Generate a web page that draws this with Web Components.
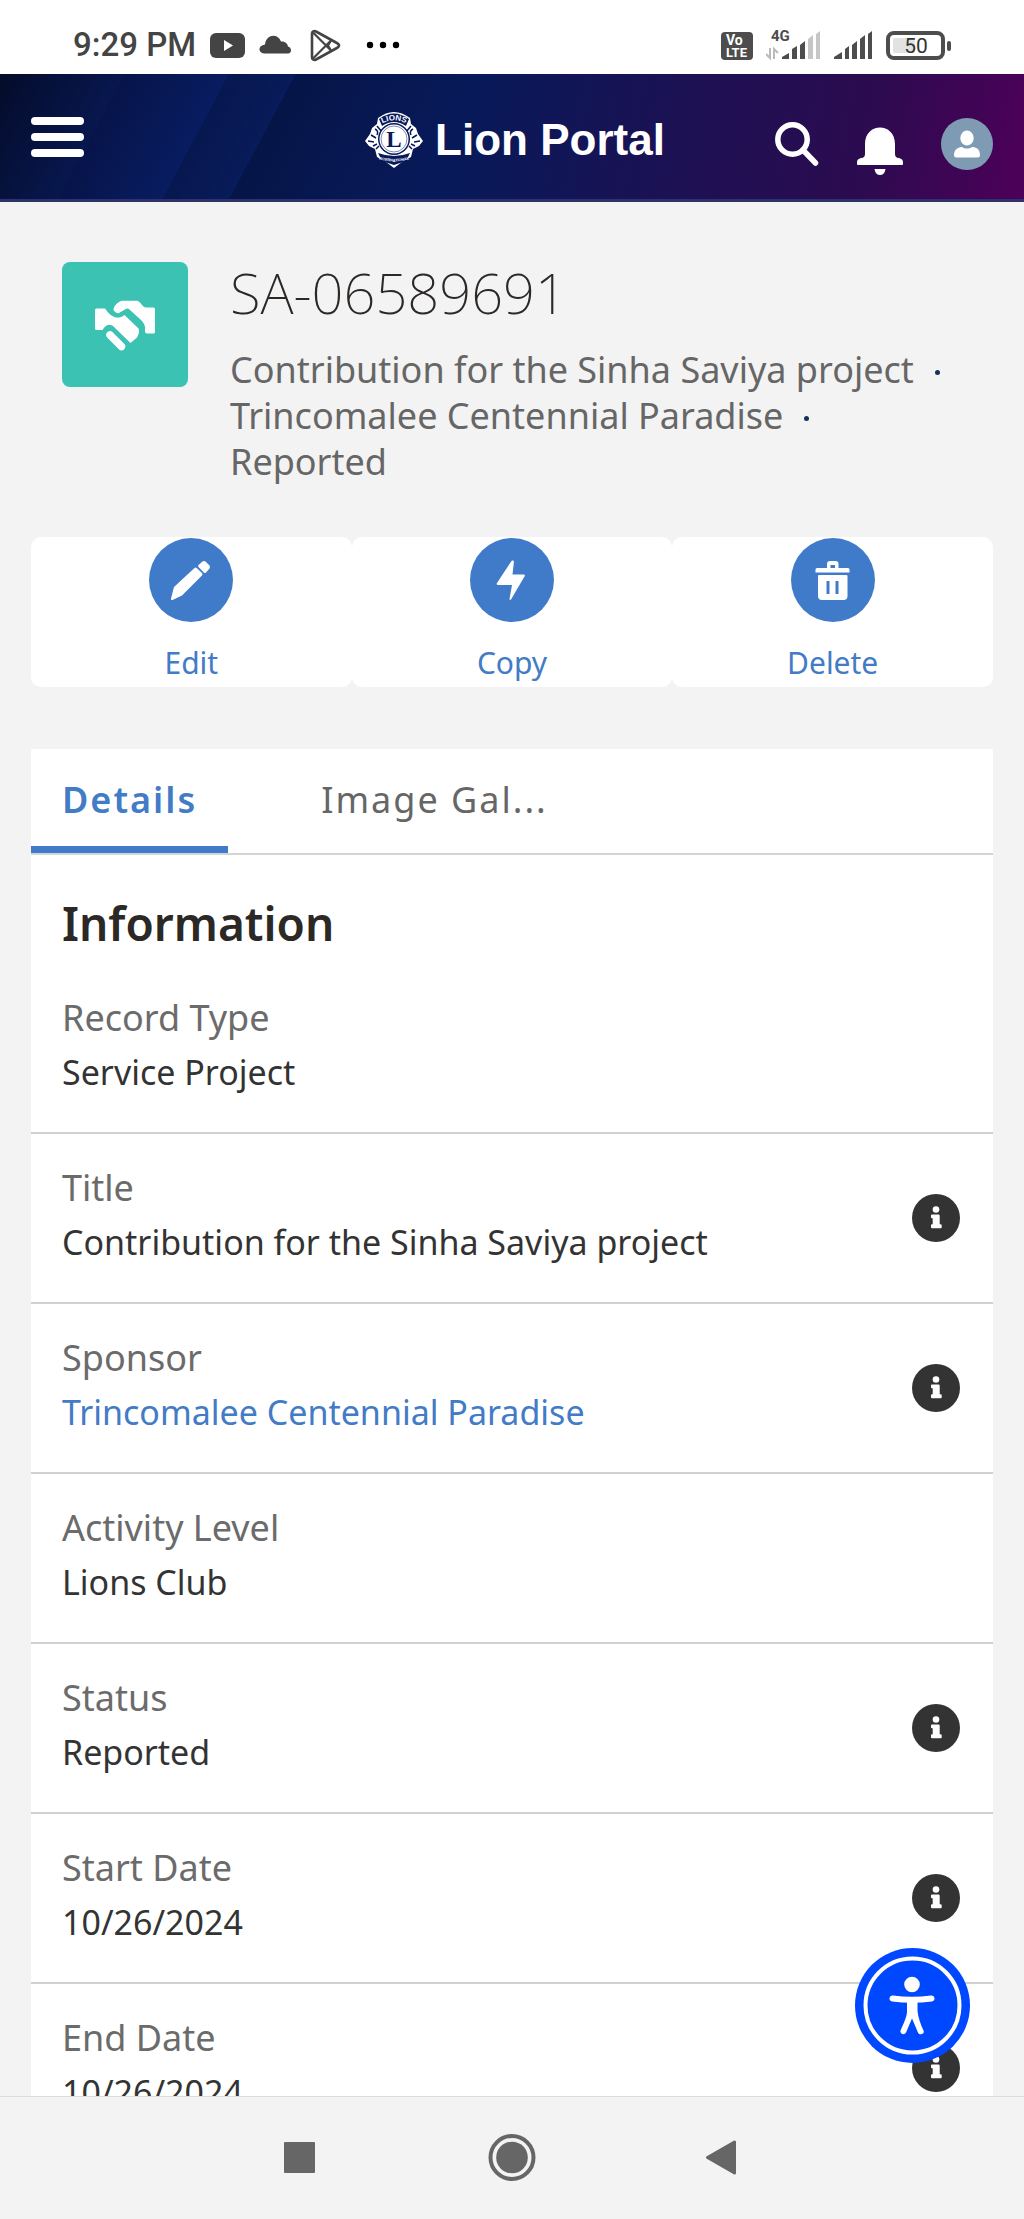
<!DOCTYPE html>
<html lang="en">
<head>
<meta charset="utf-8">
<meta name="viewport" content="width=device-width, initial-scale=1">
<title>Lion Portal</title>
<style>
  html, body { margin: 0; height: 100%; }
  body { font-family: "Noto Sans", "Open Sans", sans-serif; background: #f3f3f3; color: #333; }
</style>
</head>
<body>
<portal-app></portal-app>
<script>
const define = (name, html, setup) => {
  const template = document.createElement('template');
  template.innerHTML = html;
  customElements.define(name, class extends HTMLElement {
    constructor() {
      super();
      this.attachShadow({ mode: 'open' }).append(template.content.cloneNode(true));
    }
    connectedCallback() { if (setup) setup(this, this.shadowRoot); }
  });
};

define('status-bar', `
<style>
  :host { display: flex; justify-content: space-between; align-items: center; height: 58px; padding: 16px 73px 0; background: #fff; color: #444; font-family: Roboto, sans-serif; flex: none; }
  div { display: flex; align-items: center; }
  .left { gap: 14px; } .right { gap: 13px; }
  time { font-size: 33px; font-weight: 500; line-height: 40px; }
  svg { display: block; }
</style>
<div class="left">
  <time>9:29 PM</time>
  <svg width="35" height="36" viewBox="0 0 35 36"><rect y="6" width="35" height="25" rx="6" fill="#444"/><path d="M14 13v11l9-5.500z" fill="#fff"/></svg>
  <svg width="32" height="36" viewBox="0 0 32 36" fill="#444"><path d="M5 26.500c-6-.5-6.500-8 1-9C7 7 19 6 22 14.500c4-.5 6.500 2 7 5 4 1 4 6.500 0 7z"/></svg>
  <svg width="39" height="36" viewBox="0 0 39 36" fill="none" stroke="#444" stroke-width="2.600" stroke-linejoin="round"><path d="M7 6.500c0-2 2-3 4-2l20 11c4 2 4 4 0 6L11 32.500c-2 1-4 0-4-2z"/><path d="M8 5.500l18 18M8 31.500l18-18M26 13.500l-3 5 3 5" stroke-width="2.200"/></svg>
  <svg width="44" height="36" viewBox="0 0 44 36"><circle cx="12" cy="18" r="3.200"/><circle cx="25" cy="18" r="3.200"/><circle cx="38" cy="18" r="3.200"/></svg>
</div>
<div class="right">
  <svg width="32" height="36" viewBox="0 0 32 36"><rect y="5" width="32" height="28" rx="4" fill="#4d4d4d"/><g fill="#fff" font-family="Roboto, sans-serif" font-weight="700"><text x="5" y="18" font-size="14">Vo</text><text x="5" y="30" font-size="13">LTE</text></g></svg>
  <svg width="55" height="36" viewBox="0 0 55 36" fill="#4d4d4d"><text x="5" y="14" font-family="Roboto, sans-serif" font-weight="700" font-size="15">4G</text><path d="M4 21v10l-4-4M8 32V22l4 4" fill="none" stroke="#bbb" stroke-width="2"/><path d="M16 32v-2l7-4v6zM26 32V22l5-3v13zM34 32V18l5-4v18z"/><path d="M42 32V12l5-4v24zM50 32V7l4-3v28z" fill="#c6c6c6"/></svg>
  <svg width="39" height="36" viewBox="0 0 39 36" fill="#4d4d4d"><path d="M0 32v-2l8-5v7zM11 32V22l4-3v13zM18 32V18l5-4v18zM26 32V12l5-4v24zM34 32V7l4-3v28z"/></svg>
  <svg width="65" height="36" viewBox="0 0 65 36"><rect x="2" y="6" width="55" height="25" rx="6" fill="#fff" stroke="#4d4d4d" stroke-width="4"/><rect x="7" y="11" width="22" height="15" rx="2" fill="#e2e2e2"/><rect x="61" y="14" width="4" height="10" rx="2" fill="#4d4d4d"/><text x="30" y="26" text-anchor="middle" font-family="Roboto, sans-serif" font-weight="400" font-size="21" fill="#333">50</text></svg>
</div>`);

define('lions-emblem', `
<style>:host { display: block; } svg { display: block; overflow: visible; }</style>
<svg width="58" height="56" viewBox="0 0 58 56">
  <path d="M13 6Q29-6 45 6l1 6 5 4 2 6 5 7-4 5-6 3-2 8-9 5-8 6-8-6-9-5-2-8-6-3-4-5 5-7 2-6 5-4z" fill="#fff"/>
  <path d="M14 7Q29-4 44 7l-3 7Q29 6 17 14z" fill="#07195a"/>
  <path d="M13 41q16 6 32 0l-4 8-12 4-12-4z" fill="#07195a"/>
  <path d="M10 17q4 2 2 6M6 23l5 3M3 29l6 1M8 34l4-2M11 37l3-3M48 17q-4 2-2 6M52 23l-5 3M55 29l-6 1M50 34l-4-2M47 37l-3-3M12 14l5 6M46 14l-5 6" fill="none" stroke="#07195a" stroke-width="1.500"/>
  <circle cx="29" cy="27" r="16" fill="#07195a"/><circle cx="29" cy="27" r="14.500" fill="#fff"/>
  <circle cx="29" cy="27" r="13" fill="none" stroke="#07195a" stroke-width=".5"/>
  <path id="top" d="M15 12.500Q29 4.500 43 12.500" fill="none"/><path id="low" d="M13 47Q29 52 45 47" fill="none"/>
  <text font-family="Liberation Sans, sans-serif" font-weight="700" font-size="8" fill="#fff" text-anchor="middle"><textPath href="#top" startOffset="50%">LIONS</textPath></text>
  <text font-family="Liberation Sans, sans-serif" font-weight="700" font-size="3.800" fill="#fff" text-anchor="middle"><textPath href="#low" startOffset="50%">INTERNATIONAL</textPath></text>
  <text x="29" y="35" font-family="Liberation Serif, serif" font-weight="700" font-size="23" fill="#07195a" text-anchor="middle">L</text>
</svg>`);

define('portal-header', `
<style>
  :host { display: grid; grid-template-columns: 1fr auto 1fr; align-items: center; height: 125px; padding: 0 31px; flex: none;
    border-bottom: 3px solid #2d3269;
    background: linear-gradient(118deg, #050c2a 0, #07174e 110px, #07144a 110px, #081c60 202px, #07174f 202px, #081b5a 261px, #061547 261px, rgba(7,26,90,0) 420px),
      linear-gradient(100deg, #071a5a 0, #081959 46%, #1a1254 64%, #2c0b50 84%, #4d0058 100%); }
  button, a.me { border: 0; padding: 0; background: none; cursor: pointer; display: block; }
  .menu { justify-self: start; }
  .brand { display: flex; align-items: center; gap: 12px; color: #fff; text-decoration: none; font: 700 44px/52px "Liberation Sans", sans-serif; padding: 7px 0 0 6px; }
  .tools { justify-self: end; display: flex; align-items: center; gap: 38px; padding-top: 14px; }
  svg { display: block; }
</style>
<button class="menu" aria-label="Menu"><svg width="53" height="40" viewBox="0 0 53 40" fill="#fff"><rect width="53" height="8" rx="4"/><rect y="16" width="53" height="8" rx="4"/><rect y="32" width="53" height="8" rx="4"/></svg></button>
<a class="brand" href="#"><lions-emblem></lions-emblem><span>Lion Portal</span></a>
<div class="tools">
  <button aria-label="Search"><svg width="44" height="44" viewBox="0 0 44 44" fill="none" stroke="#fff" stroke-width="5.500" stroke-linecap="round"><circle cx="17.500" cy="17.500" r="14.700"/><path d="M28 28l12.500 13"/></svg></button>
  <button aria-label="Notifications"><svg width="46" height="62" viewBox="0 0 46 62" fill="#fff"><path d="M8 31C8 9 38 9 38 31v10q0 4 4 4 4 1 4 4v2q0 1-1 1H1q-1 0-1-1v-2q0-3 4-4 4 0 4-4z"/><path d="M17.500 56h11q-1 6-5.500 6t-5.500-6z"/></svg></button>
  <a class="me" href="#" aria-label="My profile"><svg width="52" height="52" viewBox="0 0 52 52"><circle cx="26" cy="26" r="26" fill="#7f9bb3"/><ellipse cx="26" cy="20" rx="6.700" ry="7.400" fill="#fff"/><path d="M13 37c0-6 5-8 8-8 3 2 7 2 10 0 4 0 8 2 8 8q0 2.500-2.500 2.500h-21Q13 39.500 13 37z" fill="#fff"/></svg></a>
</div>`);

define('record-summary', `
<style>
  :host { display: flex; align-items: flex-start; gap: 42px; padding: 58px 62px 52px; }
  .tile { flex: none; margin-top: 2px; width: 126px; height: 125px; border-radius: 8px; background: #3cc2b3; }
  .text { min-width: 0; }
  h1 { margin: 0 0 23px; font-size: 56px; font-weight: 200; line-height: 64px; color: #2b2826; }
  ::slotted(ul) { margin: 0; padding: 0; list-style: none; font-size: 36px; line-height: 46px; color: #666; }
</style>
<svg class="tile" viewBox="0 0 126 125" fill="#fff" aria-hidden="true">
  <path d="M33 48q0-1.500 1.500-1.500H43c4 6 11 13 19.500 6.500L76 66c2 2 1 6-1 9.500L68.500 81 53 66c-4-5-9-4-12.500 2H34.500Q33 68 33 66.500z"/>
  <path d="M51.500 48c0-4 5-9 9-9.200h14.500c2 0 3.500 2.500 5 4.200 1.500 2 3 2.500 5 2.500h6.500q1.500 0 1.500 1.500v23q0 1.500-1.500 1.500h-6.500q-2 0-2-2v-4c0-3-2-5-4-7.500L68 48q-2.500-2.500-5-.5l-6 3.500q-3.500 1-5.500-3z"/>
  <path d="M48 73l11.500 11.500" stroke="#fff" stroke-width="7.500" stroke-linecap="round"/>
</svg>
<div class="text"><h1><slot name="title"></slot></h1><slot></slot></div>`);

const glyphs = {
  edit: '<path d="M25 49L45.500 30q1-1 2.200 0l5.300 5q1 1.200 0 2.400L33 57.500 23.500 62q-2 .5-1.500-1.500z"/><path d="M49.500 27l4-3.500q1.500-1 3 0l4 4q1 1.500 0 3L57 34.500q-1.200 1-2.200 0l-5.300-5.500q-1-1 0-2z"/>',
  copy: '<path d="M42.500 22.500c1 0 1.500.5 1.400 1.500l-1.400 12.500h11.500q1.500.5.5 2L41 61.500q-1.500 1-1.500-.5L42 47H28q-2-.5-1-2l14.500-22z"/>',
  delete: '<path d="M36 30v-4q0-3 3-3h5.500q3 0 3 3v4H57q1.500 0 1.500 1.500v3H24.500v-3Q24.500 30 26 30zm3.500 0H44v-3h-4.500z" fill-rule="evenodd"/><path d="M28 37h27.500q1 0 1 1v20q0 4-4 4H31q-4 0-4-4V38q0-1 1-1zm7.500 6v13h3V43zm9 0v13h3V43z" fill-rule="evenodd"/>'
};
define('action-button', `
<style>
  :host { display: block; flex: 1; }
  button { display: flex; flex-direction: column; align-items: center; width: 100%; height: 150px; border: 0; border-radius: 10px; padding: 1px 0 0; background: #fff; color: #427bc6; font: inherit; font-size: 30px; line-height: 40px; cursor: pointer; }
  svg { display: block; width: 84px; height: 84px; margin-bottom: 21px; }
</style>
<button><svg viewBox="0 0 84 84" aria-hidden="true"><circle cx="42" cy="42" r="42" fill="#407bca"/><g fill="#fff"></g></svg><slot></slot></button>`,
  (el, root) => { root.querySelector('g').innerHTML = glyphs[el.getAttribute('icon')]; });

define('record-tab', `
<style>
  :host { display: block; }
  button { border: 0; border-bottom: 7px solid transparent; background: none; padding: 24px 31px 19px; font: inherit; font-size: 36px; line-height: 54px; letter-spacing: 2px; color: #666; cursor: pointer; display: block; }
  :host([selected]) button { color: #427bc6; font-weight: 600; border-color: #407bca; }
</style>
<button role="tab"><slot></slot></button>`,
  (el, root) => root.querySelector('button').setAttribute('aria-selected', el.hasAttribute('selected')));

define('record-card', `
<style>
  :host { display: block; margin: 62px 31px 0; background: #fff; }
  .tabs { display: flex; gap: 62px; border-bottom: 2px solid #d4d4d4; }
  h2 { margin: 0; padding: 32px 31px 5px; font-size: 46px; font-weight: 600; line-height: 72px; color: #2b2826; }
</style>
<div class="tabs" role="tablist"><slot name="tab"></slot></div>
<h2><slot name="heading"></slot></h2>
<slot></slot>`);

define('record-field', `
<style>
  :host { display: flex; align-items: center; justify-content: space-between; padding: 27px 33px 33px 31px; border-bottom: 2px solid #d0d0d0; }
  .label { font-size: 36px; line-height: 54px; color: #6b6b6b; }
  .value { font-size: 34px; line-height: 54px; color: #333; }
  ::slotted(a) { color: #427bc6; text-decoration: none; }
  button { display: none; border: 0; padding: 0; margin-top: 6px; background: none; cursor: pointer; }
  :host([help]) button { display: block; }
  svg { display: block; }
</style>
<div><div class="label"></div><div class="value"><slot></slot></div></div>
<button><svg width="48" height="48" viewBox="0 0 48 48"><circle cx="24" cy="24" r="24" fill="#333"/><g fill="#fff"><circle cx="24" cy="15.500" r="3.300"/><path d="M19 21.500q0-1 1-1h6.500q1.200 0 1.200 1.200v8.600h.8q1.200 0 1.200 1v2q0 1-1 1h-8.700q-1 0-1-1v-2q0-1 1-1h.7v-6H20q-1 0-1-1z"/></g></svg></button>`,
  (el, root) => {
    root.querySelector('.label').textContent = el.getAttribute('label');
    root.querySelector('button').setAttribute('aria-label', 'Help ' + el.getAttribute('label'));
  });

define('accessibility-button', `
<style>
  :host { display: block; position: absolute; right: 54px; bottom: 33px; }
  button { display: block; border: 0; padding: 0; background: none; border-radius: 50%; cursor: pointer; }
  svg { display: block; }
</style>
<button aria-label="Accessibility options"><svg width="115" height="115" viewBox="0 0 115 115">
  <circle cx="57.500" cy="57.500" r="57.500" fill="#0048ff"/><circle cx="57.500" cy="57.500" r="47" fill="none" stroke="#fff" stroke-width="4"/>
  <circle cx="57" cy="36.500" r="7.800" fill="#fff"/>
  <path d="M37.500 50.500q19.500 2.500 39 0" fill="none" stroke="#fff" stroke-width="6" stroke-linecap="round"/>
  <path d="M52 52h10.500v11q1 9 6.200 20c1 3-4 4.500-5.500 2L57 70.500 51 84.500c-2 3.500-6.500 1-5.500-2 5-11 6.500-15 6.500-19.500z" fill="#fff"/>
</svg></button>`);

define('system-nav', `
<style>
  :host { display: flex; justify-content: center; align-items: center; gap: 162px; height: 122px; flex: none; border-top: 1px solid #dcdcdc; background: #f3f3f3; }
  button { display: block; border: 0; padding: 0; background: none; cursor: pointer; }
  svg { display: block; }
</style>
<button aria-label="Recent apps"><svg width="48" height="48" viewBox="0 0 48 48"><rect x="6" y="8" width="31" height="31" rx="1" fill="#666"/></svg></button>
<button aria-label="Home"><svg width="48" height="48" viewBox="0 0 48 48"><circle cx="24" cy="23.500" r="21.500" fill="none" stroke="#666" stroke-width="4"/><circle cx="24" cy="23.500" r="15.800" fill="#666"/></svg></button>
<button aria-label="Back"><svg width="48" height="48" viewBox="0 0 48 48"><path d="M9.500 23.500L36.500 8v31z" fill="#666" stroke="#666" stroke-width="3" stroke-linejoin="round"/></svg></button>`);

define('portal-app', `
<style>
  :host { display: flex; flex-direction: column; height: 100vh; background: #f3f3f3; }
  .screen { flex: 1; min-height: 0; position: relative; display: flex; }
  main { flex: 1; min-width: 0; overflow-y: auto; scrollbar-width: none; }
  .actions { display: flex; margin: 0 31px; }
  li { display: inline-block; }
  li:not(:last-child)::after { content: ""; display: inline-block; width: 5px; height: 5px; border-radius: 50%; margin: 0 21px; vertical-align: 8px; background: #16325c; }
</style>
<status-bar></status-bar>
<portal-header></portal-header>
<div class="screen">
  <main>
    <record-summary><span slot="title">SA-06589691</span><ul><li>Contribution for the Sinha Saviya project</li><li>Trincomalee Centennial Paradise</li><li>Reported</li></ul></record-summary>
    <div class="actions">
      <action-button icon="edit">Edit</action-button><action-button icon="copy">Copy</action-button><action-button icon="delete">Delete</action-button>
    </div>
    <record-card>
      <record-tab slot="tab" selected>Details</record-tab>
      <record-tab slot="tab">Image Gal...</record-tab>
      <span slot="heading">Information</span>
      <record-field label="Record Type">Service Project</record-field>
      <record-field label="Title" help>Contribution for the Sinha Saviya project</record-field>
      <record-field label="Sponsor" help><a href="#">Trincomalee Centennial Paradise</a></record-field>
      <record-field label="Activity Level">Lions Club</record-field>
      <record-field label="Status" help>Reported</record-field>
      <record-field label="Start Date" help>10/26/2024</record-field>
      <record-field label="End Date" help>10/26/2024</record-field>
    </record-card>
  </main>
  <accessibility-button></accessibility-button>
</div>
<system-nav></system-nav>`);
</script>
</body>
</html>
